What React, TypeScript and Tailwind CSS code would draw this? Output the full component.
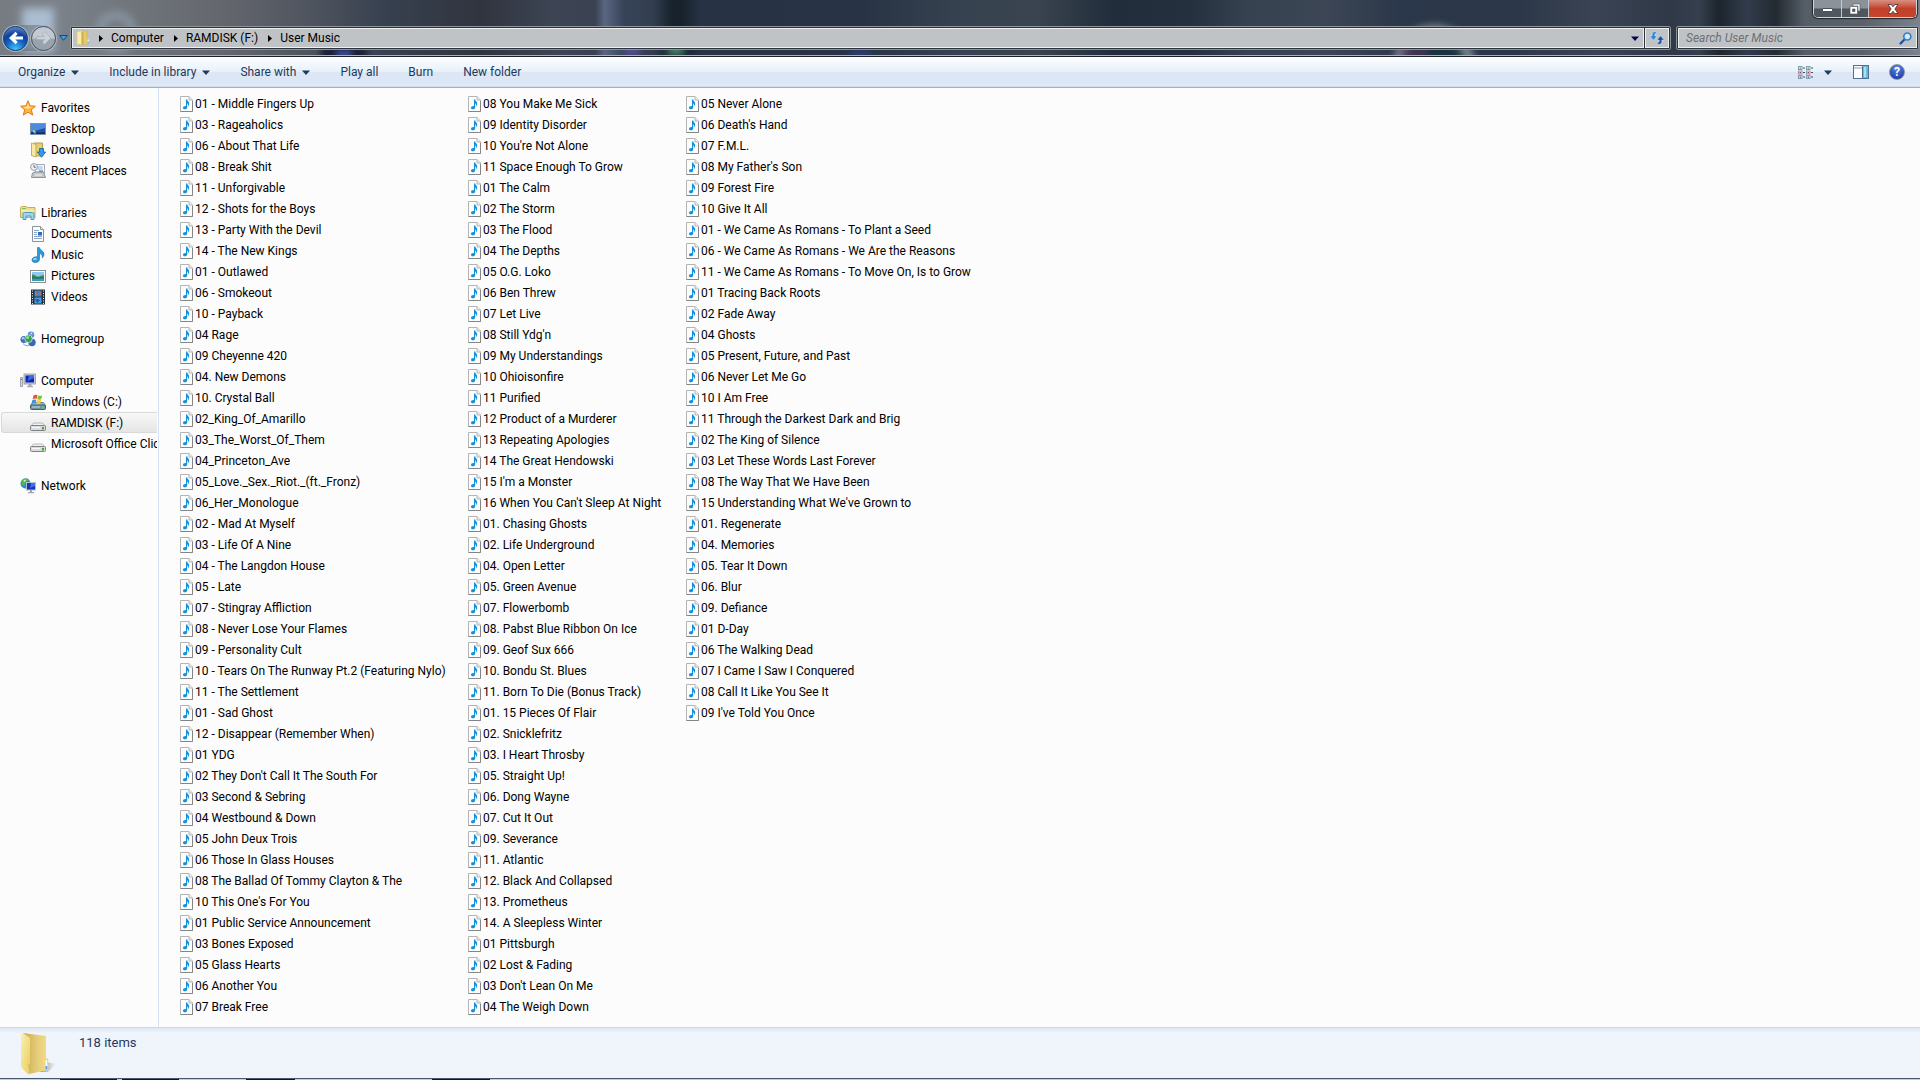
import React, { useId } from "react";

const columnOne = [
  "01 - Middle Fingers Up", "03 - Rageaholics", "06 - About That Life", "08 - Break Shit",
  "11 - Unforgivable", "12 - Shots for the Boys", "13 - Party With the Devil", "14 - The New Kings",
  "01 - Outlawed", "06 - Smokeout", "10 - Payback", "04 Rage", "09 Cheyenne 420", "04. New Demons",
  "10. Crystal Ball", "02_King_Of_Amarillo", "03_The_Worst_Of_Them", "04_Princeton_Ave",
  "05_Love._Sex._Riot._(ft._Fronz)", "06_Her_Monologue", "02 - Mad At Myself", "03 - Life Of A Nine",
  "04 - The Langdon House", "05 - Late", "07 - Stingray Affliction", "08 - Never Lose Your Flames",
  "09 - Personality Cult", "10 - Tears On The Runway Pt.2 (Featuring Nylo)", "11 - The Settlement",
  "01 - Sad Ghost", "12 - Disappear (Remember When)", "01 YDG", "02 They Don't Call It The South For",
  "03 Second & Sebring", "04 Westbound & Down", "05 John Deux Trois", "06 Those In Glass Houses",
  "08 The Ballad Of Tommy Clayton & The", "10 This One's For You", "01 Public Service Announcement",
  "03 Bones Exposed", "05 Glass Hearts", "06 Another You", "07 Break Free",
];

const columnTwo = [
  "08 You Make Me Sick", "09 Identity Disorder", "10 You're Not Alone", "11 Space Enough To Grow",
  "01 The Calm", "02 The Storm", "03 The Flood", "04 The Depths", "05 O.G. Loko", "06 Ben Threw",
  "07 Let Live", "08 Still Ydg'n", "09 My Understandings", "10 Ohioisonfire", "11 Purified",
  "12 Product of a Murderer", "13 Repeating Apologies", "14 The Great Hendowski", "15 I'm a Monster",
  "16 When You Can't Sleep At Night", "01. Chasing Ghosts", "02. Life Underground", "04. Open Letter",
  "05. Green Avenue", "07. Flowerbomb", "08. Pabst Blue Ribbon On Ice", "09. Geof Sux 666",
  "10. Bondu St. Blues", "11. Born To Die (Bonus Track)", "01. 15 Pieces Of Flair", "02. Snicklefritz",
  "03. I Heart Throsby", "05. Straight Up!", "06. Dong Wayne", "07. Cut It Out", "09. Severance",
  "11. Atlantic", "12. Black And Collapsed", "13. Prometheus", "14. A Sleepless Winter",
  "01 Pittsburgh", "02 Lost & Fading", "03 Don't Lean On Me", "04 The Weigh Down",
];

const columnThree = [
  "05 Never Alone", "06 Death's Hand", "07 F.M.L.", "08 My Father's Son", "09 Forest Fire",
  "10 Give It All", "01 - We Came As Romans - To Plant a Seed", "06 - We Came As Romans - We Are the Reasons",
  "11 - We Came As Romans - To Move On, Is to Grow", "01 Tracing Back Roots", "02 Fade Away", "04 Ghosts",
  "05 Present, Future, and Past", "06 Never Let Me Go", "10 I Am Free", "11 Through the Darkest Dark and Brig",
  "02 The King of Silence", "03 Let These Words Last Forever", "08 The Way That We Have Been",
  "15 Understanding What We've Grown to", "01. Regenerate", "04. Memories", "05. Tear It Down", "06. Blur",
  "09. Defiance", "01 D-Day", "06 The Walking Dead", "07 I Came I Saw I Conquered",
  "08 Call It Like You See It", "09 I've Told You Once",
];

function Icon16({ children }: { children: React.ReactNode }) {
  return (
    <svg viewBox="0 0 16 16" className="size-4 shrink-0" aria-hidden="true">
      {children}
    </svg>
  );
}

function Caret({ className = "" }: { className?: string }) {
  return (
    <svg viewBox="0 0 8 5" className={`h-[5px] w-2 shrink-0 ${className}`} aria-hidden="true">
      <path d="M0 0.5h8L4 5z" fill="currentColor" />
    </svg>
  );
}

function TrackIcon() {
  return (
    <svg viewBox="0 0 13 16" className="h-4 w-[13px] shrink-0" aria-hidden="true">
      <path d="M0.5 0.5h8.5l3.5 3.5v11.5h-12z" fill="#fdfdfd" stroke="#b4b4b4" />
      <path d="M0.5 15.5h12V5" fill="none" stroke="#858585" />
      <path d="M9 0.5v3.5h3.5" fill="#eee" stroke="#b4b4b4" />
      <path d="M6 3.5h1.2c.2 1.800 2.300 2.300 2 4.500-.2 1.300-.8 2-1.200 2.300.4-1.500 0-2.600-.8-2.900v3.800c0 1.300-1 2.100-2.300 2.100-1 0-1.900-.5-1.900-1.500 0-1.200 1.300-2 3-1.800z" fill="#1590dc" />
    </svg>
  );
}

const StarIcon = () => (
  <Icon16>
    <path d="M8 .8l2.100 5 5.300.4-4.100 3.500 1.400 5.400L8 12.200l-4.700 2.900 1.400-5.400L.6 6.200l5.300-.4z" fill="#ffb23e" stroke="#e07a1c" />
    <path d="M8 3.200l1.300 3.500 3.700.3-6 1.800-4-1.800 3.700-.3z" fill="#ffe49a" />
  </Icon16>
);

const DesktopIcon = () => (
  <Icon16>
    <rect x="0.5" y="2.500" width="15" height="11" fill="#1d4fae" stroke="#7d93a8" />
    <path d="M1 3h14v4L1 11z" fill="#4b8be0" />
    <path d="M1 11.500h14V13H1z" fill="#1b2b44" />
    <path d="M2.500 10l1.500-1 1.500 1-1.500 2z" fill="#f0c63a" />
    <path d="M4 11l1.500-.5.5 1.500-1.500 1z" fill="#57c1f0" />
  </Icon16>
);

const DownloadsIcon = () => (
  <Icon16>
    <path d="M4 1h8.500v13H4z" fill="#e5cd77" stroke="#b79c46" />
    <path d="M1.500 1L6 2.500V15l-4.500-1.500z" fill="#f8e9a6" stroke="#c8ad55" />
    <path d="M9.500 6.500h4V10h2.200l-4.200 5.300L7.300 10h2.200z" fill="#2f9be6" stroke="#1562a5" strokeWidth=".8" />
  </Icon16>
);

const RecentIcon = () => (
  <Icon16>
    <path d="M6 1.500h8.500v9H5z" fill="#f4f7fa" stroke="#a6adb4" />
    <path d="M7.500 4h5M7.500 6h5" stroke="#89b6de" />
    <path d="M9 7.500h4v2H9z" fill="#3d87c9" />
    <path d="M2.500 10l2.500-1h8.500l2 5.500H1.500z" fill="#c3c7cb" stroke="#8e949a" />
    <path d="M5 12h7" stroke="#f5f5f5" />
    <circle cx="4" cy="4" r="3.400" fill="#eef1f4" stroke="#9aa0a7" />
    <path d="M4 2v2.300h1.800" fill="none" stroke="#5d656d" strokeWidth=".9" />
  </Icon16>
);

const LibrariesIcon = () => (
  <Icon16>
    <path d="M.5 2.500l1-1h5l1 1h7.500v10H.5z" fill="#f2dd8a" stroke="#c9ae55" />
    <path d="M2 3.500h4" stroke="#7fbb5e" />
    <path d="M1 6h14" stroke="#fdf4c9" />
    <path d="M3 14.500V9c0-1 .6-1.500 1.500-1.500h8.000c.9 0 1.500.5 1.500 1.500v5.500h-3V11H6v3.500z" fill="#9ad6f2" stroke="#4a9cc7" />
  </Icon16>
);

const DocumentIcon = () => (
  <Icon16>
    <path d="M2.500.5h8l3 3v12h-11z" fill="#fbfcfe" stroke="#8d939a" />
    <path d="M10.500.5v3h3" fill="#e3e6ea" stroke="#8d939a" />
    <path d="M4 4.500h5M4 6.500h3M4 8.500h3M4 10.500h8M4 12.500h8" stroke="#8aa3c6" />
    <path d="M8 6h4v3.500H8z" fill="#2c6cb8" />
  </Icon16>
);

const MusicIcon = () => (
  <Icon16>
    <path d="M7.500.5h1.800c.2 2.500 4.700 3 4.700 6.700 0 1.800-.8 3-1.800 3.800.6-2.500-.6-4.200-2.700-4.500v5.700c0 2-1.800 3.300-4.100 3.300-2 0-3.400-1-3.400-2.600 0-2.100 2.600-3.500 5.500-3z" fill="#2c98dc" stroke="#1a6aa8" strokeWidth=".6" />
    <ellipse cx="5" cy="12" rx="1.800" ry="1" fill="#9fd9f8" />
  </Icon16>
);

const PicturesIcon = () => (
  <Icon16>
    <rect x=".5" y="2.500" width="15" height="12" fill="#fff" stroke="#8b9096" />
    <path d="M2 4h12v4.500H2z" fill="#8fcaf0" />
    <path d="M2 6.500c3 0 4 2 6 2s4-1.500 6-1.500V10H2z" fill="#3e8e57" />
    <path d="M2 10h12v3H2z" fill="#3a9fb5" />
    <path d="M2 9.500h12v1H2z" fill="#235e52" />
  </Icon16>
);

const VideosIcon = () => (
  <Icon16>
    <path d="M1 .5h14v15H1z" fill="#27323c" />
    <path d="M4.500 1.500h7v6h-7z" fill="#3c84c9" />
    <path d="M4.500 8.500h7v6h-7z" fill="#44a0e0" />
    <path d="M5 2l3 3-3 2zM11 2L8.500 4.500 11 6z" fill="#c86a4c" />
    <path d="M5 10h3l2 1.500L7 14z" fill="#1f5fa3" />
    <path d="M2.500 1.500v14M13.500 1.500v14" stroke="#e8edf0" strokeDasharray="1 1.500" />
  </Icon16>
);

const HomegroupIcon = () => (
  <Icon16>
    <circle cx="4" cy="8.500" r="3.500" fill="#3c6cc4" />
    <circle cx="11" cy="3.800" r="3.300" fill="#5d8ed8" />
    <circle cx="12" cy="11.500" r="3.700" fill="#3a67bd" />
    <circle cx="8.500" cy="7.800" r="3.800" fill="#36a14b" stroke="#e2f2e2" strokeWidth=".7" />
    <circle cx="7.700" cy="6.500" r="1.500" fill="#96dc96" />
    <circle cx="3" cy="7.300" r="1.200" fill="#b2cdf3" />
    <circle cx="11.500" cy="2.500" r="1" fill="#d3e3fa" />
    <path d="M3 12.500c1.500 2 4 2.500 6 2" fill="none" stroke="#7aa0da" />
  </Icon16>
);

const ComputerIcon = () => (
  <Icon16>
    <path d="M.5 4.500h2v9h-2z" fill="#d5dade" stroke="#8b9198" strokeWidth=".8" />
    <path d="M1 6.500h1" stroke="#4aa33f" />
    <rect x="4" y="1" width="11.500" height="10" fill="#c7ccd1" stroke="#9298a0" strokeWidth=".8" />
    <path d="M5.500 2.500h8.500v7H5.500z" fill="#0c27b5" />
    <path d="M9 2.500h5v2.500L7.500 8z" fill="#3c69e2" />
    <path d="M8.500 11h3v2h1.500v1.200H7V13h1.500z" fill="#a5abb1" />
  </Icon16>
);

const DriveIcon = () => (
  <Icon16>
    <path d="M3.500 8h9l2.500 3H1z" fill="#f0f1f2" stroke="#a6a9ac" strokeWidth=".8" />
    <rect x=".5" y="10.500" width="15" height="5" rx="1" fill="#d9dbdd" stroke="#7f8386" />
    <path d="M2 12.500h8" stroke="#f8f8f8" />
    <path d="M12 12h2v2.500h-2z" fill="#3fae2f" />
  </Icon16>
);

const WindowsDriveIcon = () => (
  <Icon16>
    <path d="M2.500 8.500h11l2 3H.5z" fill="#8fb6c6" stroke="#54737f" strokeWidth=".8" />
    <rect x=".5" y="11" width="15" height="4.500" rx="1" fill="#6e94a3" stroke="#48626d" />
    <path d="M2 13h8" stroke="#c4dbe4" />
    <path d="M12 12.500h1.500v2H12z" fill="#55e03f" />
    <path d="M3.500 1.500C5 .5 6.300.7 7.500 1.300L6.600 5C5.300 4.400 4 4.500 2.600 5.200z" fill="#e8532a" />
    <path d="M8.200 1.600c1.300.6 2.600.6 4 0L11.200 5.300c-1.300.6-2.600.6-3.900 0z" fill="#7cbf3a" />
    <path d="M2.400 6C3.800 5.300 5 5.200 6.300 5.800L5.400 9.500C4.100 8.900 2.900 9 1.500 9.700z" fill="#3f8fe0" />
    <path d="M7.100 6.100c1.300.6 2.600.6 4 0L10.100 9.800c-1.300.6-2.600.6-3.900 0z" fill="#fbc92e" />
  </Icon16>
);

const NetworkIcon = () => (
  <Icon16>
    <circle cx="5.500" cy="5.500" r="5" fill="#2e86d6" />
    <path d="M2 2.500C4 0 8 0 9 2L6 4 4 8 1 6z" fill="#54b552" />
    <path d="M3.500 2.500l2-1 .5 1-2 1.500z" fill="#d3f2d0" />
    <rect x="6.500" y="4.500" width="9" height="7.500" fill="#1334c0" stroke="#b9c0c8" />
    <path d="M11 5h4v3l-5 2z" fill="#4272e6" />
    <path d="M10 12h2v2h2v1.200H8V14h2z" fill="#9ea5ac" />
  </Icon16>
);

function Folder({ className = "" }: { className?: string }) {
  const id = useId();
  return (
    <svg viewBox="0 0 36 44" className={className} aria-hidden="true">
      <defs>
        <linearGradient id={id + "f"} x1="0" y1="0" x2="1" y2="1">
          <stop offset="0" stopColor="#fbf0b4" />
          <stop offset="1" stopColor="#e9cd5c" />
        </linearGradient>
        <linearGradient id={id + "b"} x1="0" y1="0" x2="1" y2="0">
          <stop offset="0" stopColor="#c9ab50" />
          <stop offset=".6" stopColor="#e6cd78" />
          <stop offset="1" stopColor="#f3dc8b" />
        </linearGradient>
        <linearGradient id={id + "s"} x1="0" y1="0" x2="1" y2="0">
          <stop offset="0" stopColor="#6d7480" stopOpacity=".7" />
          <stop offset="1" stopColor="#6d7480" stopOpacity="0" />
        </linearGradient>
      </defs>
      <path d="M20 40l7-10 9 2-8 8z" fill={`url(#${id}s)`} />
      <path d="M3 1l23 3v22l1.500 2v10L9 42z" fill={`url(#${id}b)`} />
      <path d="M1 2l2-1 7 5v25l-1.500 1.500v10.500L1 35z" fill={`url(#${id}f)`} />
      <path d="M25 26.500h2c.8 0 1.200.5 1.200 1.200V37L25 39z" fill="#ecd36e" />
      <path d="M25.500 28h1.700v8.500h-1.700z" fill="#fff" />
      <path d="M25.500 34h1.700v3h-1.700z" fill="#4aa0f2" />
    </svg>
  );
}

function SmallFolder() {
  return (
    <svg viewBox="0 0 14 16" className="mr-[9px] h-4 w-[14px] shrink-0" aria-hidden="true">
      <path d="M5 1h6v9.500l1.500 1V14L5 15z" fill="#e6cb6a" stroke="#cdb052" strokeWidth=".6" />
      <path d="M1 1.500L5.500.8V15L1 14z" fill="#f9ecab" stroke="#d8bf67" strokeWidth=".6" />
      <path d="M6 2h1.500v12.300L6 14.600z" fill="#cbb04f" />
      <path d="M11.500 9.500h1.200v4h-1.200z" fill="#fff" />
      <path d="M11.500 11.500h1.200v2h-1.200z" fill="#4aa0f2" />
    </svg>
  );
}

type NavEntry = { label: string; icon: React.ReactNode; selected?: boolean };

const navGroups: { head: NavEntry; items: NavEntry[] }[] = [
  {
    head: { label: "Favorites", icon: <StarIcon /> },
    items: [
      { label: "Desktop", icon: <DesktopIcon /> },
      { label: "Downloads", icon: <DownloadsIcon /> },
      { label: "Recent Places", icon: <RecentIcon /> },
    ],
  },
  {
    head: { label: "Libraries", icon: <LibrariesIcon /> },
    items: [
      { label: "Documents", icon: <DocumentIcon /> },
      { label: "Music", icon: <MusicIcon /> },
      { label: "Pictures", icon: <PicturesIcon /> },
      { label: "Videos", icon: <VideosIcon /> },
    ],
  },
  { head: { label: "Homegroup", icon: <HomegroupIcon /> }, items: [] },
  {
    head: { label: "Computer", icon: <ComputerIcon /> },
    items: [
      { label: "Windows (C:)", icon: <WindowsDriveIcon /> },
      { label: "RAMDISK (F:)", icon: <DriveIcon />, selected: true },
      { label: "Microsoft Office Clic", icon: <DriveIcon /> },
    ],
  },
  { head: { label: "Network", icon: <NetworkIcon /> }, items: [] },
];

function NavRow({ entry, child = false }: { entry: NavEntry; child?: boolean }) {
  return (
    <a
      href="#"
      aria-current={entry.selected ? "page" : undefined}
      className={`ml-px flex h-[21px] items-center gap-[5px] overflow-hidden whitespace-nowrap rounded-l-[3px] border border-r-0 ${
        child ? "pl-7" : "pl-[18px]"
      } ${entry.selected ? "border-[#d9d9d9] bg-linear-to-b from-[#f8f8f8] to-[#e5e5e5]" : "border-transparent"}`}
    >
      {entry.icon}
      <span>{entry.label}</span>
    </a>
  );
}

function Backdrop() {
  return (
    <div
      aria-hidden="true"
      className="absolute inset-0 overflow-hidden bg-[linear-gradient(90deg,#777c82_0%,#7b828a_3%,#70757b_7%,#62656c_12%,#4a505b_17%,#384150_20%,#30343e_25%,#3d4554_29%,#3a4251_31%,#5a6782_31.500%,#374358_32.500%,#333f50_34%,#17222c_35%,#17222c_35.500%,#273344_36.500%,#283445_45%,#36424f_50%,#39444f_54%,#212d3b_58%,#24303e_62%,#36424f_65%,#3c4655_69%,#2b374a_73%,#2c3749_79%,#394353_83%,#2f3948_87%,#363f4d_88.500%,#1c242d_89.500%,#313c4c_91%,#242a32_92.500%,#555d67_94%,#5a616b_97%,#7b838e_100%)]"
    >
      <div className="absolute left-[22px] top-2 h-11 w-8 bg-[#b7cde2]/80 blur-[4px]" />
      <div className="absolute left-24 top-3 size-10 rounded-full border-[7px] border-[#9db3c6]/60 blur-[4px]" />
      <div className="absolute left-[320px] top-[46px] h-4 w-12 rounded-full bg-[#1c2033] blur-[3px]" />
      <div className="absolute left-[336px] top-[50px] h-2 w-4 bg-[#3f4fa5] blur-[3px]" />
      <div className="absolute left-[624px] top-10 h-4 w-4 bg-[#5c50a0]/80 blur-[3px]" />
      <div className="absolute left-[668px] top-10 h-4 w-4 bg-[#4d8f74]/80 blur-[3px]" />
      <div className="absolute left-[850px] top-[50px] h-2 w-5 bg-[#30408a]/70 blur-[3px]" />
      <div className="absolute left-[1394px] top-[26px] size-20 rounded-full border-8 border-[#c9ced1]/70 bg-[#16343c]/70 blur-[4px]" />
      <div className="absolute left-[1400px] top-[48px] h-2 w-7 bg-[#5d2f62]/70 blur-[3px]" />
    </div>
  );
}

const fieldFrame =
  "flex h-6 items-center rounded-[2px] border border-[#8b939b] bg-[#2c333c] p-px";
const fieldFill = "flex h-full items-center border border-[#eef0f0] bg-[#c8cbce]/95";

function TitleBar() {
  return (
    <header className="relative h-[57px] shrink-0 border-b border-[#1a1f2a]">
      <Backdrop />
      <div className="absolute inset-x-0 bottom-0 h-px bg-[#a9b2bc]" />
      <div className="absolute right-[3px] top-0 flex h-[18px] overflow-hidden rounded-b-[5px] border border-t-0 border-[#d0d4d8] bg-[#2c3038] shadow-[0_0_1px_1px_#1f242b]">
        <button aria-label="Minimize" className="flex w-7 items-end justify-center border-r border-[#c3c8cc] bg-linear-to-b from-[#8c9299] from-45% to-[#50565e] to-55% pb-[5px]">
          <span className="h-1 w-[11px] rounded-[1px] border border-[#4c5158] bg-white" />
        </button>
        <button aria-label="Restore Down" className="flex w-[27px] items-center justify-center border-r border-[#c3c8cc] bg-linear-to-b from-[#8c9299] from-45% to-[#50565e] to-55%">
          <svg viewBox="0 0 12 12" className="size-3" aria-hidden="true">
            <path d="M4 1h7v7H9V3H4z" fill="#fff" stroke="#4c5158" strokeWidth=".6" />
            <path d="M1 3.500h7.500V11H1zM3.500 6v2.500H6V6z" fill="#fff" fillRule="evenodd" stroke="#4c5158" strokeWidth=".6" />
          </svg>
        </button>
        <button aria-label="Close" className="flex w-[47px] items-center justify-center bg-linear-to-b from-[#d98f80] via-[#c2412a] via-50% to-[#c8432a]">
          <svg viewBox="0 0 12 10" className="h-[10px] w-3" aria-hidden="true">
            <path d="M1 .5h3.200L6 2.700 7.800.5H11L7.900 5l3.100 4.500H7.800L6 7.300 4.200 9.500H1L4.100 5z" fill="#fff" stroke="#4c3a3c" strokeWidth=".9" />
          </svg>
        </button>
      </div>

      <div className="relative flex h-full items-end pb-[6px] pl-[3px] pr-px">
        <div className="flex h-6 w-[67px] shrink-0 items-center">
          <div className="flex h-[26px] items-center gap-[3px] rounded-full bg-[#4a525d]/40">
            <button aria-label="Back" className="flex size-[25px] items-center justify-center rounded-full border border-[#24467c] bg-[radial-gradient(circle_at_50%_100%,#3fd0ff_0%,#1461c4_40%,#0c3f9b_62%,#7fa3d8_100%)] shadow-[0_0_0_1px_#aab6c5]">
              <svg viewBox="0 0 16 14" className="h-[14px] w-4" aria-hidden="true">
                <path d="M1 7l6.500-6.300v0L9.700 3 7.300 5.500H15v3H7.300L9.700 11l-2.200 2.300z" fill="#fff" />
              </svg>
            </button>
            <button aria-label="Forward" className="flex size-[25px] items-center justify-center rounded-full border border-[#4d5864] bg-linear-to-b from-[#c2c9d0] from-45% to-[#98a3ae] to-55% shadow-[0_0_0_1px_#aab2bb]">
              <svg viewBox="0 0 16 14" className="h-[14px] w-4" aria-hidden="true">
                <path d="M15 7L8.500.7 6.300 3l2.400 2.500H1v3h7.700L6.300 11l2.200 2.300z" fill="#c9d2d9" stroke="#a2adb6" strokeWidth=".7" />
              </svg>
            </button>
          </div>
          <button aria-label="Recent pages" className="ml-[3px] flex h-5 items-center">
            <svg viewBox="0 0 9 6" className="h-[6px] w-[9px]" aria-hidden="true">
              <path d="M.7.5h7.600L4.500 5.300z" fill="#3aa3e8" stroke="#123f6e" strokeWidth=".9" />
            </svg>
          </button>
        </div>

        <div className={`${fieldFrame} min-w-0 flex-1`}>
          <nav aria-label="Address" className={`${fieldFill} min-w-0 flex-1 pl-[3px] text-black`}>
            <SmallFolder />
            {["Computer", "RAMDISK (F:)", "User Music"].map((part) => (
              <span key={part} className="flex items-center">
                <svg viewBox="0 0 4 7" className="mr-2 h-[7px] w-1" aria-hidden="true">
                  <path d="M0 0l4 3.500L0 7z" fill="#000" />
                </svg>
                <a href="#" className="mr-[10px]">{part}</a>
              </span>
            ))}
            <button aria-label="Previous locations" className="ml-auto mr-[3px] flex h-full items-center px-px text-[#06064a]">
              <Caret />
            </button>
          </nav>
          <button aria-label="Refresh" className={`${fieldFill} ml-px w-6 justify-center`}>
            <svg viewBox="0 0 16 14" className="h-[14px] w-4 shrink-0" aria-hidden="true">
              <path d="M7.500.7H6C4 .7 3.200 2 3.200 3.500V5H.8L4.500 9.300 8 5H5.800V3.500c0-.8.500-1.200 1.700-1.200z" fill="#2e86d6" stroke="#eef6fc" strokeWidth=".4" />
              <path d="M8.500 13.300H10c2 0 2.800-1.300 2.800-2.800V9h2.400L11.500 4.700 8 9h2.200v1.500c0 .8-.5 1.200-1.700 1.200z" fill="#1b4fa0" stroke="#eef6fc" strokeWidth=".4" />
            </svg>
          </button>
        </div>

        <div className={`${fieldFrame} ml-[5px] w-[243px]`}>
          <div className={`${fieldFill} w-full pl-[7px] pr-1`}>
            <input
              type="search"
              aria-label="Search User Music"
              placeholder="Search User Music"
              className="h-full min-w-0 flex-1 bg-transparent italic outline-none placeholder:text-[#6d6f72]"
            />
            <svg viewBox="0 0 13 13" className="size-[13px]" aria-hidden="true">
              <path d="M1.500 11.500l4-4" stroke="#1d4d9b" strokeWidth="2.200" strokeLinecap="round" />
              <circle cx="8.300" cy="4.500" r="3.500" fill="#dbe9f4" stroke="#2a83cf" strokeWidth="1.700" />
            </svg>
          </div>
        </div>
      </div>
    </header>
  );
}

const commands = [
  { label: "Organize", menu: true },
  { label: "Include in library", menu: true },
  { label: "Share with", menu: true },
  { label: "Play all", menu: false },
  { label: "Burn", menu: false },
  { label: "New folder", menu: false },
];

function CommandBar() {
  return (
    <div className="flex h-[31px] shrink-0 items-center justify-between border-b border-[#a0afc9] bg-[linear-gradient(180deg,#fdfeff_0%,#e6f0fa_50%,#dce6f4_50%,#dce7f5_90%,#e6eef9_93%,#ccd9ea_100%)] pl-[18px] pr-[15px] text-[#1e395b]">
      <div className="flex items-center gap-[30px]">
        {commands.map((c) => (
          <button key={c.label} className="flex items-center gap-[6px] whitespace-nowrap">
            {c.label}
            {c.menu && <Caret />}
          </button>
        ))}
      </div>
      <div className="flex items-center">
        <button aria-label="Change your view">
          <svg viewBox="0 0 15 13" className="h-[13px] w-[15px]" aria-hidden="true">
            {[0, 8].map((x) =>
              [0, 4.5, 9].map((y, i) => (
                <g key={`${x}-${y}`}>
                  <rect x={x + 0.5} y={y + 0.5} width="3.500" height="3" fill="#fff" stroke="#8a9bb0" />
                  <rect x={x + 1.5} y={y + 1.5} width="1.500" height="1.200" fill={i === 0 ? "#3f9a4c" : i === 1 ? "#cc2b1d" : "#2c4b92"} />
                  <path d={`M${x + 5} ${y + 2}h2`} stroke="#3f5068" />
                </g>
              )),
            )}
          </svg>
        </button>
        <button aria-label="More view options" className="ml-[11px] flex items-center"><Caret /></button>
        <button aria-label="Show the preview pane" className="ml-[21px]">
          <svg viewBox="0 0 16 14" className="h-[14px] w-4" aria-hidden="true">
            <rect x=".5" y=".5" width="15" height="13" fill="#fdfdfe" stroke="#52708f" />
            <path d="M1 3h9" stroke="#8aa0b8" />
            <path d="M9.500 1v12" stroke="#52708f" />
            <path d="M10 1h5v12h-5z" fill="#62bfe0" />
            <path d="M11 2h2v10h-2z" fill="#a9e1f2" />
          </svg>
        </button>
        <button aria-label="Get help" className="ml-5 flex size-4 items-center justify-center rounded-full border border-[#8d9299] bg-[radial-gradient(circle_at_50%_20%,#5c86e0,#1232a8)] text-xs font-bold leading-none text-white">
          ?
        </button>
      </div>
    </div>
  );
}

function TrackColumn({ tracks, className }: { tracks: string[]; className: string }) {
  return (
    <ul className={`shrink-0 ${className}`}>
      {tracks.map((t) => (
        <li key={t} className="flex h-[21px] items-center gap-0.5 whitespace-nowrap">
          <TrackIcon />
          <span>{t}</span>
        </li>
      ))}
    </ul>
  );
}

export default function App() {
  return (
    <div className="flex h-screen flex-col overflow-hidden bg-[#fcfcfc] font-['Roboto','Open_Sans',sans-serif] text-xs text-black">
      <TitleBar />
      <CommandBar />
      <div className="flex min-h-0 flex-1">
        <nav aria-label="Folders" className="flex w-[159px] shrink-0 flex-col gap-[21px] overflow-hidden border-r border-[#d3e3f3] pr-px pt-[9px]">
          {navGroups.map((g) => (
            <div key={g.head.label}>
              <NavRow entry={g.head} />
              {g.items.map((item) => (
                <NavRow key={item.label} entry={item} child />
              ))}
            </div>
          ))}
        </nav>
        <main className="flex min-w-0 flex-1 overflow-hidden pl-[21px] pt-[5px]">
          <TrackColumn tracks={columnOne} className="w-72" />
          <TrackColumn tracks={columnTwo} className="w-[218px]" />
          <TrackColumn tracks={columnThree} className="w-80" />
        </main>
      </div>
      <footer className="flex h-[51px] shrink-0 items-start border-t border-[#cbdaea] bg-linear-to-b from-[#dde7f3] to-[#f0f4fb] to-10% pl-5 pt-1 text-[13px] text-[#1e395b]">
        <Folder className="h-11 w-9" />
        <p className="ml-[23px] mt-px leading-5">118 items</p>
      </footer>
      <div aria-hidden="true" className="flex h-0.5 shrink-0 border-t border-[#465870] bg-[#bcd0e6] pl-[60px]">
        <span className="w-[57px] bg-[#14181d]" />
        <span className="ml-[5px] w-[57px] bg-[#14181d]" />
        <span className="ml-[67px] w-[49px] bg-[#14181d]" />
        <span className="ml-[137px] w-[58px] bg-[#14181d]" />
      </div>
    </div>
  );
}
